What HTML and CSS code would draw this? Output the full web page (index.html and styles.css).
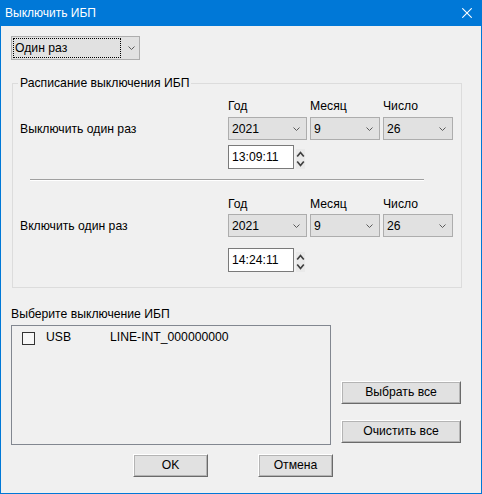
FILE: index.html
```html
<!DOCTYPE html>
<html lang="ru">
<head>
<meta charset="utf-8">
<title>Выключить ИБП</title>
<link rel="stylesheet" href="styles.css">
</head>
<body>
<div class="window">
  <div class="titlebar">
    <span class="title">Выключить ИБП</span>
    <svg class="close" width="10" height="10" viewBox="0 0 10 10"><path d="M0.3 0.3L9.7 9.7M9.7 0.3L0.3 9.7" stroke="#fff" stroke-width="1.1" fill="none"/></svg>
  </div>
  <div class="content">
    <div class="combo mode">
      <span class="focus">Один раз</span>
      <svg class="chev" width="7" height="4" viewBox="0 0 7 4"><path d="M0.5 0.5L3.5 3.5L6.5 0.5" fill="none" stroke="#5a5a5a"/></svg>
    </div>

    <fieldset class="group">
      <legend>Расписание выключения ИБП</legend>

      <div class="sched first">
        <span class="col-h">Год</span>
        <span class="col-h">Месяц</span>
        <span class="col-h">Число</span>
        <div class="sched-label">Выключить один раз</div>
        <div class="combo field"><span>2021</span><svg class="chev" width="7" height="4" viewBox="0 0 7 4"><path d="M0.5 0.5L3.5 3.5L6.5 0.5" fill="none" stroke="#5a5a5a"/></svg></div>
        <div class="combo field"><span>9</span><svg class="chev" width="7" height="4" viewBox="0 0 7 4"><path d="M0.5 0.5L3.5 3.5L6.5 0.5" fill="none" stroke="#5a5a5a"/></svg></div>
        <div class="combo field"><span>26</span><svg class="chev" width="7" height="4" viewBox="0 0 7 4"><path d="M0.5 0.5L3.5 3.5L6.5 0.5" fill="none" stroke="#5a5a5a"/></svg></div>
        <div class="time-row">
          <div class="timebox">13:09:11</div>
          <svg class="spin" width="9" height="20" viewBox="0 0 9 20"><path d="M1.2 7.5L4.5 3.5L7.8 7.5" fill="none" stroke="#404040" stroke-width="1.7"/><path d="M1.2 12.5L4.5 16.5L7.8 12.5" fill="none" stroke="#404040" stroke-width="1.7"/></svg>
        </div>
      </div>

      <div class="sep"></div>

      <div class="sched second">
        <span class="col-h">Год</span>
        <span class="col-h">Месяц</span>
        <span class="col-h">Число</span>
        <div class="sched-label">Включить один раз</div>
        <div class="combo field"><span>2021</span><svg class="chev" width="7" height="4" viewBox="0 0 7 4"><path d="M0.5 0.5L3.5 3.5L6.5 0.5" fill="none" stroke="#5a5a5a"/></svg></div>
        <div class="combo field"><span>9</span><svg class="chev" width="7" height="4" viewBox="0 0 7 4"><path d="M0.5 0.5L3.5 3.5L6.5 0.5" fill="none" stroke="#5a5a5a"/></svg></div>
        <div class="combo field"><span>26</span><svg class="chev" width="7" height="4" viewBox="0 0 7 4"><path d="M0.5 0.5L3.5 3.5L6.5 0.5" fill="none" stroke="#5a5a5a"/></svg></div>
        <div class="time-row">
          <div class="timebox">14:24:11</div>
          <svg class="spin" width="9" height="20" viewBox="0 0 9 20"><path d="M1.2 7.5L4.5 3.5L7.8 7.5" fill="none" stroke="#404040" stroke-width="1.7"/><path d="M1.2 12.5L4.5 16.5L7.8 12.5" fill="none" stroke="#404040" stroke-width="1.7"/></svg>
        </div>
      </div>
    </fieldset>

    <div class="list-label">Выберите выключение ИБП</div>
    <div class="list-area">
      <div class="listbox">
        <div class="list-row">
          <span class="check"></span>
          <span class="port">USB</span>
          <span class="model">LINE-INT_000000000</span>
        </div>
      </div>
      <div class="side-buttons">
        <button class="btn wide">Выбрать все</button>
        <button class="btn wide">Очистить все</button>
      </div>
    </div>

    <div class="dialog-buttons">
      <button class="btn">OK</button>
      <button class="btn">Отмена</button>
    </div>
  </div>
</div>
</body>
</html>
```

FILE: styles.css
```css
* { box-sizing: border-box; }

body {
  margin: 0;
  font-family: "Liberation Sans", Arial, sans-serif;
  font-size: 12.2px;
  color: #000;
  background: #f0f0f0;
}

.window {
  width: 482px;
  height: 494px;
  border: 1px solid #0078d7;
  border-top: 0;
  background: #f0f0f0;
  overflow: hidden;
}

.titlebar {
  height: 26px;
  background: #0078d7;
  color: #fff;
  display: flex;
  align-items: center;
  justify-content: space-between;
  padding: 0 9px 0 4px;
}

.title {
  font-size: 12px;
  line-height: 14px;
  padding-bottom: 1px;
}

.close { display: block; }

.content {
  padding: 10px 0 0 10px;
}

.combo {
  display: flex;
  align-items: center;
  background: #e1e1e1;
  border: 1px solid #adadad;
}

.chev { display: block; flex: none; }

.combo.mode {
  width: 129px;
  height: 24px;
  padding: 1px;
}

.combo.mode .focus {
  width: 108px;
  height: 20px;
  border: 1px dotted #000;
  padding-left: 1px;
  line-height: 18px;
}

.combo.mode .chev { margin-left: 7px; }

.group {
  margin: 16px 0 0 1px;
  padding: 0 0 15px 0;
  width: 450px;
  border: 1px solid #dcdcdc;
  min-inline-size: 0;
}

.group legend {
  padding: 0 2px;
  margin-left: 5px;
  line-height: 14px;
}

.sched {
  display: grid;
  grid-template-columns: 205px 79px 70px 70px;
  column-gap: 3px;
  padding-left: 7px;
  --g1: 4px;
  --g2: 5px;
}

.sched.first { margin-top: 9px; }

.sched.second {
  margin-top: 16px;
  --g1: 3px;
  --g2: 11px;
}

.col-h {
  line-height: 14px;
  grid-row: 1;
}
.col-h:nth-child(1) { grid-column: 2; }
.col-h:nth-child(2) { grid-column: 3; }
.col-h:nth-child(3) { grid-column: 4; }

.sched-label {
  grid-column: 1;
  grid-row: 2;
  align-self: center;
  margin-top: var(--g1);
  line-height: 14px;
}

.combo.field {
  grid-row: 2;
  height: 23px;
  margin-top: var(--g1);
  padding: 0 6px 0 3px;
  justify-content: space-between;
}

.time-row {
  grid-column: 2 / span 3;
  grid-row: 3;
  margin-top: var(--g2);
  display: flex;
  align-items: flex-end;
}

.timebox {
  width: 66px;
  height: 24px;
  border: 1px solid #7a7a7a;
  background: #fff;
  padding-left: 3px;
  line-height: 22px;
}

.spin {
  display: block;
  margin-left: 2px;
  background: #e9e9e9;
}

.sep {
  margin: 10px 0 0 17px;
  width: 394px;
  height: 2px;
  border-top: 1px solid #a0a0a0;
  border-bottom: 1px solid #fff;
}

.list-label {
  margin-top: 19px;
  line-height: 14px;
}

.list-area {
  margin-top: 4px;
  display: flex;
}

.listbox {
  width: 320px;
  height: 120px;
  border: 1px solid #828790;
  background: #f0f0f0;
}

.list-row {
  display: flex;
  align-items: center;
  height: 19px;
  margin-top: 1px;
  padding-left: 10px;
}

.check {
  width: 13px;
  height: 13px;
  border: 1px solid #333;
  background: #f7f7f7;
  margin-top: 3px;
}

.port {
  margin-left: 11px;
  width: 64px;
}

.side-buttons {
  margin-left: 10px;
  width: 120px;
  display: flex;
  flex-direction: column;
  justify-content: flex-end;
  gap: 16px;
  padding-bottom: 2px;
}

.btn {
  font: inherit;
  color: #000;
  width: 75px;
  height: 23px;
  padding: 0;
  background: #e1e1e1;
  border: 1px solid;
  border-color: #fff #6a6a6a #6a6a6a #fff;
  box-shadow: inset 0 0 0 1px #b4b4b4;
  line-height: 19px;
}

.btn.wide { width: 120px; }

.dialog-buttons {
  margin: 9px 0 0 122px;
  display: flex;
  gap: 50px;
}
```
